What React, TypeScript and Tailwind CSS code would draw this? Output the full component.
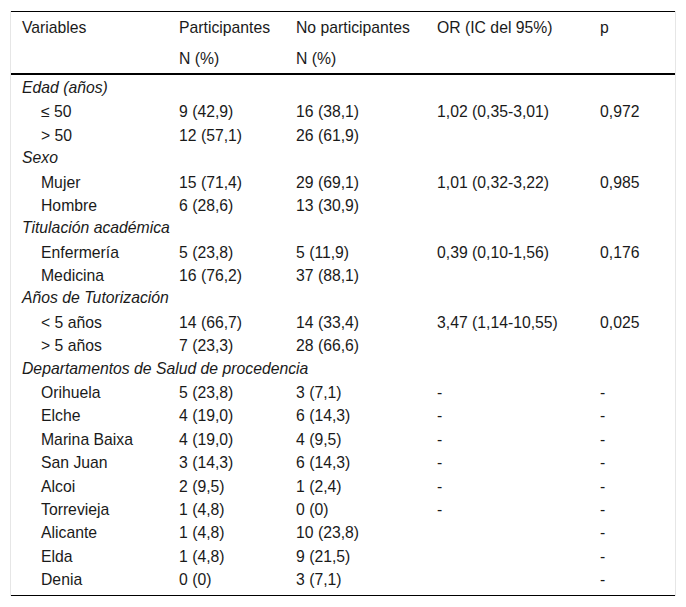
import React from "react";

type Row = { label: string; kind: "group" | "item"; a?: string; b?: string; or?: string; p?: string };

const rows: Row[] = [
  { label: "Edad (años)", kind: "group" },
  { label: "≤ 50", kind: "item", a: "9 (42,9)", b: "16 (38,1)", or: "1,02 (0,35-3,01)", p: "0,972" },
  { label: "> 50", kind: "item", a: "12 (57,1)", b: "26 (61,9)" },
  { label: "Sexo", kind: "group" },
  { label: "Mujer", kind: "item", a: "15 (71,4)", b: "29 (69,1)", or: "1,01 (0,32-3,22)", p: "0,985" },
  { label: "Hombre", kind: "item", a: "6 (28,6)", b: "13 (30,9)" },
  { label: "Titulación académica", kind: "group" },
  { label: "Enfermería", kind: "item", a: "5 (23,8)", b: "5 (11,9)", or: "0,39 (0,10-1,56)", p: "0,176" },
  { label: "Medicina", kind: "item", a: "16 (76,2)", b: "37 (88,1)" },
  { label: "Años de Tutorización", kind: "group" },
  { label: "< 5 años", kind: "item", a: "14 (66,7)", b: "14 (33,4)", or: "3,47 (1,14-10,55)", p: "0,025" },
  { label: "> 5 años", kind: "item", a: "7 (23,3)", b: "28 (66,6)" },
  { label: "Departamentos de Salud de procedencia", kind: "group" },
  { label: "Orihuela", kind: "item", a: "5 (23,8)", b: "3 (7,1)", or: "-", p: "-" },
  { label: "Elche", kind: "item", a: "4 (19,0)", b: "6 (14,3)", or: "-", p: "-" },
  { label: "Marina Baixa", kind: "item", a: "4 (19,0)", b: "4 (9,5)", or: "-", p: "-" },
  { label: "San Juan", kind: "item", a: "3 (14,3)", b: "6 (14,3)", or: "-", p: "-" },
  { label: "Alcoi", kind: "item", a: "2 (9,5)", b: "1 (2,4)", or: "-", p: "-" },
  { label: "Torrevieja", kind: "item", a: "1 (4,8)", b: "0 (0)", or: "-", p: "-" },
  { label: "Alicante", kind: "item", a: "1 (4,8)", b: "10 (23,8)", p: "-" },
  { label: "Elda", kind: "item", a: "1 (4,8)", b: "9 (21,5)", p: "-" },
  { label: "Denia", kind: "item", a: "0 (0)", b: "3 (7,1)", p: "-" },
];

const grid = "grid grid-cols-[157px_117px_141px_163px_1fr] pl-[11px]";

export default function App() {
  return (
    <div
      className="bg-white pt-[11px] pl-[10px] h-[607px] text-[#1a1a1a] text-[15.75px]"
      style={{ fontFamily: '"Liberation Sans", Arial, sans-serif' }}
    >
      <div className="w-[666px] border-x border-[#e6e6e6]">
        <div className="border-t border-black">
          <div className={`${grid} h-[30.5px] pt-[2px] items-center`}>
            <div>Variables</div>
            <div>Participantes</div>
            <div>No participantes</div>
            <div>OR (IC del 95%)</div>
            <div>p</div>
          </div>
          <div className={`${grid} h-[30.5px] pt-[2px] items-center`}>
            <div></div>
            <div>N (%)</div>
            <div>N (%)</div>
            <div></div>
            <div></div>
          </div>
        </div>
        <div className="border-t-2 border-black" />
        <div className="pb-[5px] border-b border-black">
          {rows.map((r, i) =>
            r.kind === "group" ? (
              <div key={i} className="h-[23.4px] pt-[2px] flex items-center pl-[11px] italic whitespace-nowrap">
                {r.label}
              </div>
            ) : (
              <div key={i} className={`${grid} h-[23.4px] pt-[2px] items-center whitespace-nowrap`}>
                <div className="pl-[19px]">{r.label}</div>
                <div>{r.a}</div>
                <div>{r.b}</div>
                <div>{r.or ?? ""}</div>
                <div>{r.p ?? ""}</div>
              </div>
            )
          )}
        </div>
      </div>
    </div>
  );
}
